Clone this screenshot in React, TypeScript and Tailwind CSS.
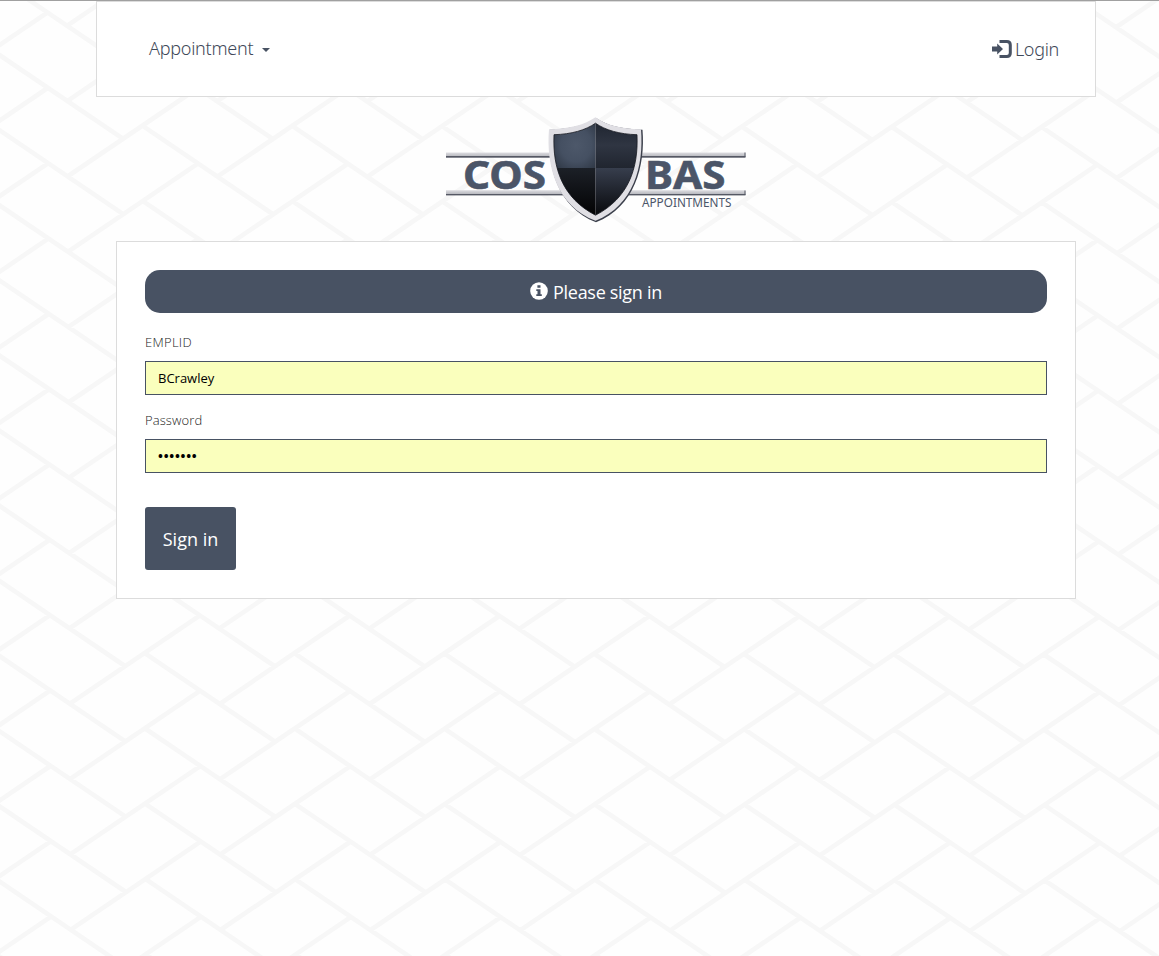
import React from "react";

const COL = 149.86;
const ROW = 75.33;

function place(x: number, y: number) {
  const px = x + (y - 616) * 0.004;
  const py = y + x * 0.0015;
  return `${px.toFixed(2)} ${py.toFixed(2)}`;
}

function buildLattice() {
  const parts: string[] = [];
  for (let c = -2; c < 9; c++) {
    for (let r = -10; r < 6; r++) {
      const ox = c * COL;
      const oy = r * ROW;
      parts.push(`M${place(145 + ox, 653.2 + oy)}L${place(273.5 + ox, 740.4 + oy)}`);
      parts.push(`M${place(70 + ox, 703.2 + oy)}L${place(198.5 + ox, 616 + oy)}`);
    }
  }
  return parts.join("");
}

const lattice = buildLattice();

function Backdrop() {
  return (
    <svg className="absolute -top-px left-0 -z-10" width="1159" height="956" aria-hidden="true">
      <path d={lattice} stroke="#f7f7f7" strokeWidth="4.6" fill="none" />
    </svg>
  );
}

function LoginIcon() {
  return (
    <svg width="20" height="18" viewBox="0 0 20 18" className="mt-[-1px]" aria-hidden="true">
      <path d="M7.5 1.5H14.800Q18.300 1.5 18.300 5V13Q18.300 16.500 14.800 16.500H7.500" fill="none" stroke="#485263" strokeWidth="3" />
      <path d="M0 6.400H5.200V3.400L11 9L5.200 14.400V11.400H0Z" fill="#485263" />
    </svg>
  );
}

function InfoIcon() {
  return (
    <svg width="18" height="18" viewBox="0 0 18 18" className="mt-[-1px]" aria-hidden="true">
      <circle cx="9" cy="9" r="8.8" fill="#fff" />
      <path d="M7.4 3.3H10.5V5.8H7.4ZM6.3 7.3H10.5V12.3H11.8V14H6.3V12.3H7.5V9H6.3Z" fill="#485263" />
    </svg>
  );
}

function Logo() {
  const shield =
    "M160 17C150 24 136 28 118.500 28.500C117 62 127 92 160 109C193 92 203 62 201.500 28.500C184 28 170 24 160 17Z";
  return (
    <svg width="320" height="130" viewBox="0 0 320 130" role="img" aria-label="COSBAS Appointments">
      <defs>
        <clipPath id="shield"><path d={shield} /></clipPath>
        <linearGradient id="bar" x1="0" y1="0" x2="0" y2="1">
          <stop offset="0" stopColor="#dedee2" />
          <stop offset="0.65" stopColor="#bcbdc3" />
          <stop offset="0.76" stopColor="#555864" />
          <stop offset="1" stopColor="#555864" />
        </linearGradient>
        <radialGradient id="tl" cx="0.55" cy="0.5" r="0.8">
          <stop offset="0" stopColor="#4d586a" /><stop offset="0.45" stopColor="#455062" /><stop offset="1" stopColor="#252d39" />
        </radialGradient>
        <linearGradient id="tr" x1="0" y1="0" x2="0" y2="1">
          <stop offset="0" stopColor="#1f2530" /><stop offset="0.5" stopColor="#2f3542" /><stop offset="1" stopColor="#20252f" />
        </linearGradient>
        <linearGradient id="bl" x1="0" y1="0" x2="0" y2="1">
          <stop offset="0" stopColor="#1c2027" /><stop offset="1" stopColor="#020203" />
        </linearGradient>
        <linearGradient id="br" x1="0" y1="0" x2="0" y2="1">
          <stop offset="0" stopColor="#373e4d" /><stop offset="1" stopColor="#07080b" />
        </linearGradient>
      </defs>
      <rect x="10" y="46.500" width="299.500" height="5.200" fill="url(#bar)" />
      <rect x="10" y="84.200" width="299.500" height="5.200" fill="url(#bar)" />
      <path d="M309 46.500V51M309 84.500V89" stroke="#555864" />
      <g transform="translate(-0.5 0.2)">
        <path d="M161 12C150 19 136 22.500 114.500 23.500C111 60 122 101 160.500 116C199 101 210 60 207 23.500C184 22.500 171 19 161 12Z" fill="#3c404c" />
        <path d="M160 11C148 19 134 22.500 113.500 23C110.500 60 121 99.500 160 114.500C198 99.500 208.500 60 205.500 23C185 22.500 171 19 160 11Z" fill="#e0dfe4" />
        <g clipPath="url(#shield)">
          <rect x="117" y="16" width="43" height="46" fill="url(#tl)" />
          <rect x="160" y="16" width="43" height="46" fill="url(#tr)" />
          <rect x="117" y="61.800" width="43" height="48" fill="url(#bl)" />
          <rect x="160" y="61.800" width="43" height="48" fill="url(#br)" />
        </g>
        <path d={shield} fill="none" stroke="#15181f" strokeWidth="0.8" />
      </g>
      <g fill="#4b5568" fontFamily="'Noto Sans', 'Open Sans', sans-serif">
        <text x="27" y="82.800" fontSize="40" fontWeight="700" textLength="83" lengthAdjust="spacingAndGlyphs" stroke="#4b5568" strokeWidth="0.6">COS</text>
        <text x="209" y="82.800" fontSize="40" fontWeight="700" textLength="80.500" lengthAdjust="spacingAndGlyphs" stroke="#4b5568" strokeWidth="0.6">BAS</text>
        <text x="206" y="100.800" fontSize="12" textLength="89.500" lengthAdjust="spacingAndGlyphs">APPOINTMENTS</text>
      </g>
    </svg>
  );
}

export default function App() {
  return (
    <div className="relative isolate flex h-[956px] w-[1159px] flex-col overflow-hidden border-t border-[#a0a0a0] bg-[#fefefe] pl-[96px] font-['Open_Sans','Noto_Sans',sans-serif] text-[#485263]">
      <Backdrop />
      <nav className="flex h-24 w-[1000px] shrink-0 items-center justify-between border border-[#dcdcdc] bg-white pr-[36px] pl-[52px] text-[18px] font-[350] text-[#3f4959]">
        <a className="flex items-center pb-px">
          <span className="w-[106px] font-['Noto_Sans','Open_Sans',sans-serif] tracking-[-0.25px]">Appointment</span>
          <span className="ml-[7px] mt-[3px] border-x-4 border-t-4 border-x-transparent border-t-[#485263]" />
        </a>
        <a className="flex items-center gap-[3px]">
          <LoginIcon />
          <span className="font-['Noto_Sans','Open_Sans',sans-serif] tracking-[-0.3px]">Login</span>
        </a>
      </nav>
      <header className="mt-[9px] flex h-[135px] w-[1000px] shrink-0 justify-center">
        <Logo />
      </header>
      <main className="ml-5 h-[358px] w-[960px] shrink-0 border border-[#dcdcdc] bg-white p-7">
        <div className="flex h-[43px] items-center justify-center gap-[5px] rounded-[15px] bg-[#485263] text-[18px] text-white">
          <InfoIcon />
          <span className="pt-[2px] tracking-[-0.3px]">Please sign in</span>
        </div>
        <form className="flex flex-col items-start text-[13px]">
          <label htmlFor="emplid" className="mt-[19px] h-[29px] leading-5 font-[350] tracking-[0.3px] text-[#222]">EMPLID</label>
          <input id="emplid" defaultValue="BCrawley" className="h-[34px] w-full border border-[#485263] bg-[#faffbd] px-3 text-black outline-none" />
          <label htmlFor="password" className="mt-[15px] h-[29px] leading-5 font-[350] tracking-[0.1px] text-[#222]">Password</label>
          <input id="password" type="password" defaultValue="appoint" className="h-[34px] w-full border border-[#485263] bg-[#faffbd] px-3 text-[13px] font-bold tracking-[0.75px] text-black outline-none" />
          <button type="button" className="mt-[34px] h-[63px] w-[91px] rounded-[3px] bg-[#485263] pt-[2px] text-[18px] text-white">Sign in</button>
        </form>
      </main>
    </div>
  );
}
